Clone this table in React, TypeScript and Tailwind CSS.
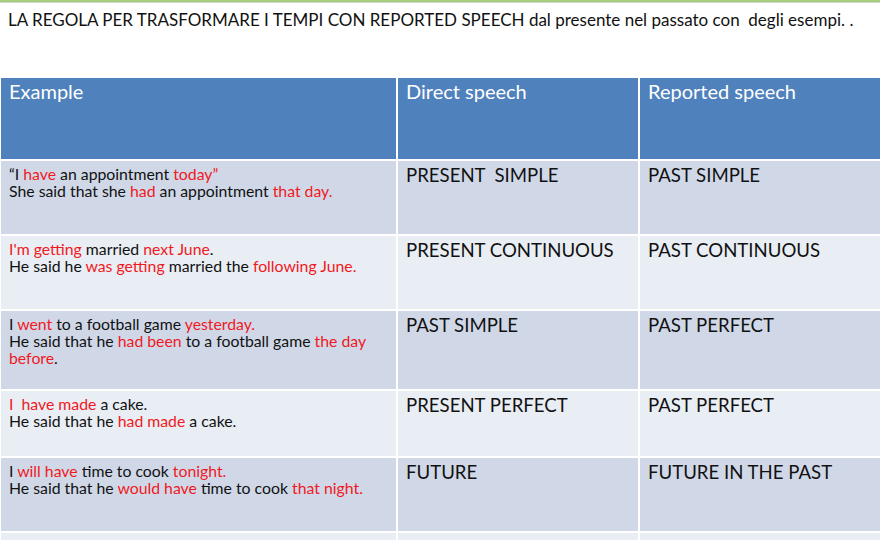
import React from "react"

type Part = string | { r: string }

const rows: { ex: Part[][]; direct: string; reported: string; h: string; bg: string }[] = [
  {
    ex: [
      ["“I ", { r: "have" }, " an appointment ", { r: "today”" }],
      ["She said that she ", { r: "had" }, " an appointment ", { r: "that day." }],
    ],
    direct: "PRESENT\u00a0\u00a0SIMPLE",
    reported: "PAST SIMPLE",
    h: "h-[73px]",
    bg: "bg-[#d0d8e8]",
  },
  {
    ex: [
      [{ r: "I'm getting" }, " married ", { r: "next June" }, "."],
      ["He said he ", { r: "was getting" }, " married the ", { r: "following June." }],
    ],
    direct: "PRESENT CONTINUOUS",
    reported: "PAST CONTINUOUS",
    h: "h-[73px]",
    bg: "bg-[#e9edf4]",
  },
  {
    ex: [
      ["I ", { r: "went" }, " to a football game ", { r: "yesterday." }],
      ["He said that he ", { r: "had been" }, " to a football game ", { r: "the day before" }, "."],
    ],
    direct: "PAST SIMPLE",
    reported: "PAST PERFECT",
    h: "h-[78px]",
    bg: "bg-[#d0d8e8]",
  },
  {
    ex: [
      [{ r: "I\u00a0 have made" }, " a cake."],
      ["He said that he ", { r: "had made" }, " a cake."],
    ],
    direct: "PRESENT PERFECT",
    reported: "PAST PERFECT",
    h: "h-[65px]",
    bg: "bg-[#e9edf4]",
  },
  {
    ex: [
      ["I ", { r: "will have" }, " time to cook ", { r: "tonight." }],
      ["He said that he ", { r: "would have" }, " time to cook ", { r: "that night." }],
    ],
    direct: "FUTURE",
    reported: "FUTURE IN THE PAST",
    h: "h-[73px]",
    bg: "bg-[#d0d8e8]",
  },
  {
    ex: [["I ", { r: "can" }, " swim."]],
    direct: "",
    reported: "",
    h: "h-[73px]",
    bg: "bg-[#e9edf4]",
  },
]

function Line({ parts }: { parts: Part[] }) {
  return (
    <div>
      {parts.map((p, i) =>
        typeof p === "string" ? (
          <span key={i}>{p}</span>
        ) : (
          <span key={i} className="text-[#f0191e]">
            {p.r}
          </span>
        )
      )}
    </div>
  )
}

export default function App() {
  return (
    <div
      className="w-[880px] h-[540px] overflow-hidden bg-white text-[#111]"
      style={{ fontFamily: "Lato, 'Liberation Sans', sans-serif" }}
    >
      <div className="h-[3px] bg-[#a6cd7d] border-b border-[#cfd8c4]" />
      <div className="pl-[8px] pt-[6px] h-[75px] text-[17px] leading-[21px] whitespace-nowrap">
        LA REGOLA PER TRASFORMARE I TEMPI CON REPORTED SPEECH dal presente nel passato con&nbsp; degli esempi. .
      </div>
      <div className="grid grid-cols-[395px_240px_1fr] gap-[2px] bg-white pl-[1px]">
        <div className="h-[81px] bg-[#4f81bd] text-white text-[20px] leading-[24px] pl-[8px] pt-[1px]">Example</div>
        <div className="h-[81px] bg-[#4f81bd] text-white text-[20px] leading-[24px] pl-[8px] pt-[1px]">
          Direct speech
        </div>
        <div className="h-[81px] bg-[#4f81bd] text-white text-[20px] leading-[24px] pl-[8px] pt-[1px]">
          Reported speech
        </div>
        {rows.map((row, i) => (
          <React.Fragment key={i}>
            <div className={`${row.h} ${row.bg} pl-[8px] pr-[30px] pt-[4px] text-[15.8px] leading-[17px]`}>
              {row.ex.map((l, j) => (
                <Line key={j} parts={l} />
              ))}
            </div>
            <div className={`${row.h} ${row.bg} pl-[8px] pt-[3px] text-[18.6px] leading-[22px]`}>{row.direct}</div>
            <div className={`${row.h} ${row.bg} pl-[8px] pt-[3px] text-[18.6px] leading-[22px]`}>{row.reported}</div>
          </React.Fragment>
        ))}
      </div>
    </div>
  )
}
